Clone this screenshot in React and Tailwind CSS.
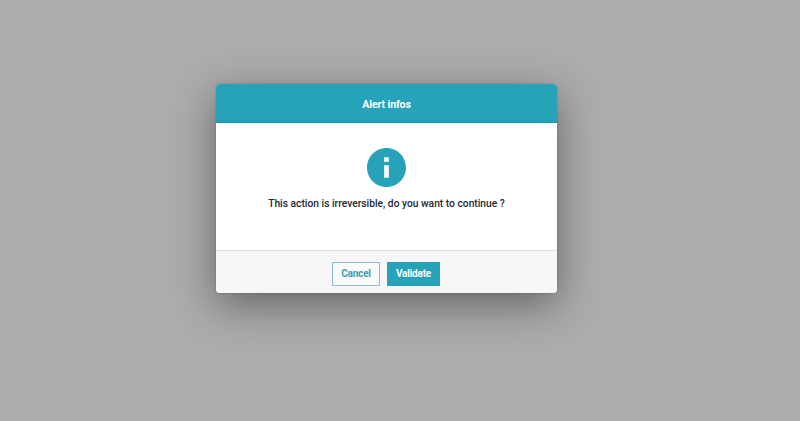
export default function App() {
  return (
    <div className="flex h-[421px] w-[800px] items-start overflow-hidden bg-[#acacac] pl-[216px] pt-[84px] font-['Roboto',sans-serif]">
      <section role="dialog" className="flex h-[209px] w-[341px] flex-col overflow-hidden rounded-[4px] bg-white shadow-[0_12px_42px_rgba(0,0,0,0.42),0_0_2px_rgba(0,0,0,0.25)]">
        <header className="flex h-[39px] shrink-0 items-center justify-center border-b border-[#1595ad] bg-[#26a2b9] pt-[4px] text-[10.5px] font-bold tracking-[-0.1px] text-white">
          Alert infos
        </header>
        <main className="flex h-[127px] shrink-0 flex-col items-center pt-[25px]">
          <svg className="size-[39px]" viewBox="2 2 20 20" fill="#26a2b9">
            <path d="M12 2C6.48 2 2 6.48 2 12s4.48 10 10 10 10-4.48 10-10S17.52 2 12 2zm1.2 15.2h-2.4v-6.4h2.4v6.4zm0-8.1h-2.4V6.7h2.4v2.4z" />
          </svg>
          <p className="mt-[9px] whitespace-nowrap text-[10.25px] leading-4 font-medium text-[#212934]">
            This action is irreversible, do you want to continue ?
          </p>
        </main>
        <footer className="flex h-[43px] shrink-0 items-start justify-center gap-[7px] border-t border-[#dedede] bg-[#f7f7f7] pt-[11px] pr-[1px] text-[10px] font-bold tracking-[-0.2px]">
          <button className="h-[24px] w-[48px] border border-[#8bbdcb] bg-[#fafafa] pb-[1px] text-[#3a9fb3]">Cancel</button>
          <button className="h-[24px] w-[53px] bg-[#26a2b9] pb-[1px] text-white">Validate</button>
        </footer>
      </section>
    </div>
  );
}
